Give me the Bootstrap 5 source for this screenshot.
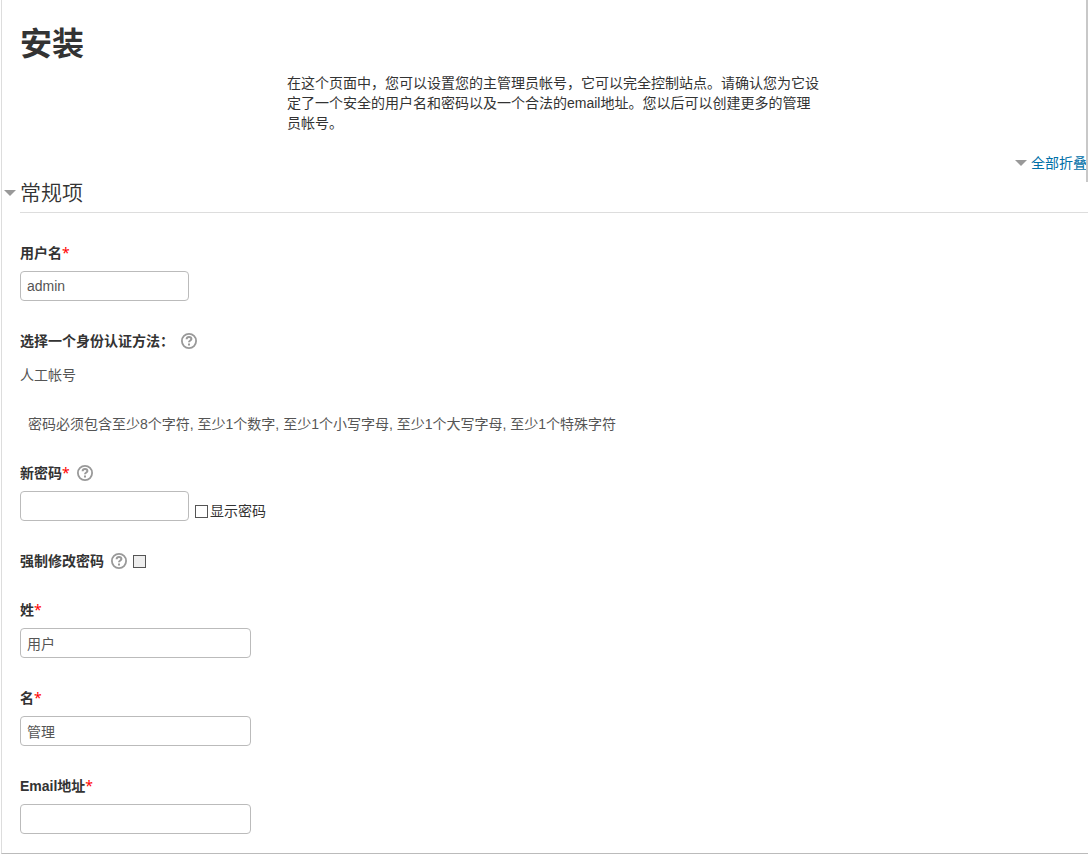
<!DOCTYPE html>
<html lang="zh-CN">
<head>
<meta charset="utf-8">
<meta name="viewport" content="width=device-width, initial-scale=1">
<title>安装</title>
<link href="https://cdn.jsdelivr.net/npm/bootstrap@5.3.0/dist/css/bootstrap.min.css" rel="stylesheet">
<style>
  body { font: 14px/20px "Liberation Sans", "Noto Sans CJK SC", sans-serif; color: #333; background: #fff; }
  .shell { min-height: calc(100vh - 1px); margin-left: 1px; padding: 22px 0 18px 18px; border-left: 1px solid #ddd; border-bottom: 1px solid #bbb; }
  .scroll-thumb { top: 0; right: 0; width: 2px; height: 182px; background: #c8c8c8; }
  .page-title { font-size: 32px; line-height: 44px; font-weight: 700; margin-bottom: 7px; }
  .toggle-all { color: #0070a8; margin-right: 1px; }
  .toggle-all:hover { color: #004a70; }
  .caret { width: 12px; height: 6px; fill: #999; }
  .section-title { font-size: 21px; line-height: 39px; font-weight: 350; margin-bottom: 30px; border-bottom: 1px solid #ddd; }
  .section-title .caret { right: 100%; top: 17px; margin-right: 4px; }
  .field { margin-bottom: 30px; }
  .field-tight { margin-bottom: 29px; }
  .field-label { font-weight: 700; }
  .req { color: #f00; font-family: "Noto Sans", sans-serif; font-weight: 400; line-height: 1; }
  .text-box { height: 30px; margin-top: 8px; padding: 4px 6px; font-size: 14px; line-height: 20px; color: #555; border: 1px solid #bbb; border-radius: 4px; }
  .box-short { width: 169px; }
  .box-long { width: 231px; }
  .static-text { color: #555; margin-top: 14px; }
  .help { width: 16px; height: 16px; color: #999; border: 0; background: none; padding: 0; display: flex; }
  .help-gap { margin-left: 7px; }
  .tick { appearance: none; width: 13px; height: 13px; margin: 0; border: 1px solid #555; background: #fff; }
  .tick:checked { background: #555; }
  .tick:disabled { background: #eee; }
  .tick-gap { margin-left: 6px; }
  .tick-label { padding-left: 2px; }
</style>
</head>
<body>
<svg class="d-none" aria-hidden="true">
  <symbol id="down" viewBox="0 0 12 6"><path d="M0 0h12L6 6z"/></symbol>
  <symbol id="question" viewBox="0 0 16 16">
    <circle cx="8" cy="8" r="7.1" fill="none" stroke="currentColor" stroke-width="1.8"/>
    <path d="M5.600 6.200C5.700 4.800 6.600 4.100 8 4.100c1.500 0 2.400.8 2.400 1.900C10.400 7.500 8 7.500 8 9.300" fill="none" stroke="currentColor" stroke-width="2"/>
    <path d="M7 10.400h2v2H7z" fill="currentColor"/>
  </symbol>
</svg>
<main class="shell">
  <div class="scroll-thumb position-absolute"></div>
  <h1 class="page-title">安装</h1>
  <div class="row g-0">
    <p class="col-6 offset-3 mb-0">在这个页面中，您可以设置您的主管理员帐号，它可以完全控制站点。请确认您为它设定了一个安全的用户名和密码以及一个合法的email地址。您以后可以创建更多的管理员帐号。</p>
  </div>
  <form>
    <div class="d-flex justify-content-end mt-3 pt-1">
      <a href="#general" class="toggle-all d-flex align-items-center text-decoration-none gap-1"><svg class="caret" aria-hidden="true"><use href="#down"/></svg>全部折叠</a>
    </div>
    <h2 class="section-title position-relative" id="general"><svg class="caret position-absolute" aria-hidden="true"><use href="#down"/></svg>常规项</h2>

    <div class="field">
      <label class="field-label d-block" for="username">用户名<span class="req">*</span></label>
      <input class="text-box box-short d-block" type="text" id="username" value="admin">
    </div>
    <div class="field-tight">
      <div class="d-flex align-items-center">
        <span class="field-label">选择一个身份认证方法：</span>
        <button type="button" class="help help-gap" aria-label="帮助"><svg width="16" height="16"><use href="#question"/></svg></button>
      </div>
      <div class="static-text">人工帐号</div>
    </div>
    <div class="field-tight ps-2"><span class="static-text">密码必须包含至少8个字符, 至少1个数字, 至少1个小写字母, 至少1个大写字母, 至少1个特殊字符</span></div>
    <div class="field">
      <div class="d-flex align-items-center">
        <label class="field-label" for="password">新密码<span class="req">*</span></label>
        <button type="button" class="help help-gap" aria-label="帮助"><svg width="16" height="16"><use href="#question"/></svg></button>
      </div>
      <div class="d-flex align-items-end">
        <input class="text-box box-short" type="password" id="password">
        <div class="d-flex align-items-center tick-gap">
          <input class="tick" type="checkbox" id="reveal">
          <label class="tick-label" for="reveal">显示密码</label>
        </div>
      </div>
    </div>
    <div class="field-tight d-flex align-items-center">
      <label class="field-label" for="force">强制修改密码</label>
      <button type="button" class="help help-gap" aria-label="帮助"><svg width="16" height="16"><use href="#question"/></svg></button>
      <input class="tick tick-gap" type="checkbox" id="force" disabled>
    </div>
    <div class="field">
      <label class="field-label d-block" for="lastname">姓<span class="req">*</span></label>
      <input class="text-box box-long d-block" type="text" id="lastname" value="用户">
    </div>
    <div class="field">
      <label class="field-label d-block" for="firstname">名<span class="req">*</span></label>
      <input class="text-box box-long d-block" type="text" id="firstname" value="管理">
    </div>
    <div>
      <label class="field-label d-block" for="email">Email地址<span class="req">*</span></label>
      <input class="text-box box-long d-block" type="email" id="email">
    </div>
  </form>
</main>
<script src="https://cdn.jsdelivr.net/npm/bootstrap@5.3.0/dist/js/bootstrap.bundle.min.js"></script>
</body>
</html>
